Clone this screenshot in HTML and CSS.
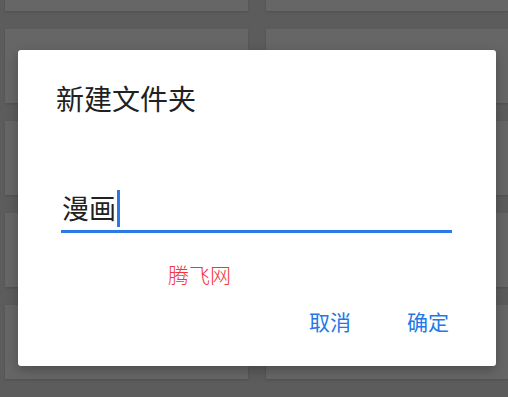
FILE: index.html
```html
<!DOCTYPE html>
<html lang="zh-CN">
<head>
  <meta charset="UTF-8">
  <title>新建文件夹</title>
  <link rel="stylesheet" href="styles.css">
</head>
<body>

  <div class="fundo">
    <div class="cartao"></div><div class="cartao"></div>
    <div class="cartao"></div><div class="cartao"></div>
    <div class="cartao"></div><div class="cartao"></div>
    <div class="cartao"></div><div class="cartao"></div>
    <div class="cartao"></div><div class="cartao"></div>
  </div>

  <div class="dialogo">
    <div class="titulo">新建文件夹</div>

    <div class="campo">
      <span class="valor">漫画</span><span class="cursor"></span>
    </div>

    <div class="marca">腾飞网</div>

    <div class="acoes">
      <button class="btn">取消</button>
      <button class="btn">确定</button>
    </div>
  </div>

</body>
</html>
```

FILE: styles.css
```css
html, body {
  margin: 0;
  height: 100%;
  overflow: hidden;
}
body {
  font-family: "Noto Sans CJK SC", "Noto Sans", sans-serif;
  background: #5c5c5c;
  position: relative;
}
.fundo {
  display: grid;
  grid-template-columns: 243px 243px;
  grid-auto-rows: 74px;
  column-gap: 18px;
  row-gap: 18px;
  margin-top: -63px;
  padding-left: 5px;
}
.cartao {
  background: #666666;
  box-shadow: 0 1px 2px rgba(0,0,0,0.15);
}
.dialogo {
  position: absolute;
  left: 18px;
  top: 50px;
  width: 478px;
  height: 316px;
  background: #fff;
  border-radius: 3px;
  box-shadow: 0 4px 12px rgba(0,0,0,0.25);
}
.titulo {
  font-size: 28px;
  line-height: 28px;
  color: #212121;
  padding: 34px 0 0 38px;
}
.campo {
  margin: 77px 0 0 43px;
  width: 391px;
  height: 44px;
  border-bottom: 3px solid #2979e8;
  box-sizing: border-box;
  display: flex;
  align-items: flex-end;
}
.campo .valor {
  font-size: 27px;
  line-height: 32px;
  color: #212121;
  padding-left: 1px;
  padding-bottom: 6px;
}
.campo .cursor {
  width: 3px;
  height: 37px;
  background: #2979e8;
  margin-left: 1px;
  margin-bottom: 3px;
}
.marca {
  font-size: 21px;
  line-height: 21px;
  font-weight: 300;
  color: #f2353a;
  padding-left: 150px;
  margin-top: 31px;
}
.acoes {
  display: flex;
  justify-content: flex-end;
  gap: 56px;
  padding-right: 47px;
  margin-top: 26px;
}
.btn {
  font-family: "Noto Sans CJK SC", "Noto Sans", sans-serif;
  font-size: 21px;
  line-height: 21px;
  color: #2378e6;
  background: none;
  border: none;
  padding: 0;
  cursor: pointer;
}
```
